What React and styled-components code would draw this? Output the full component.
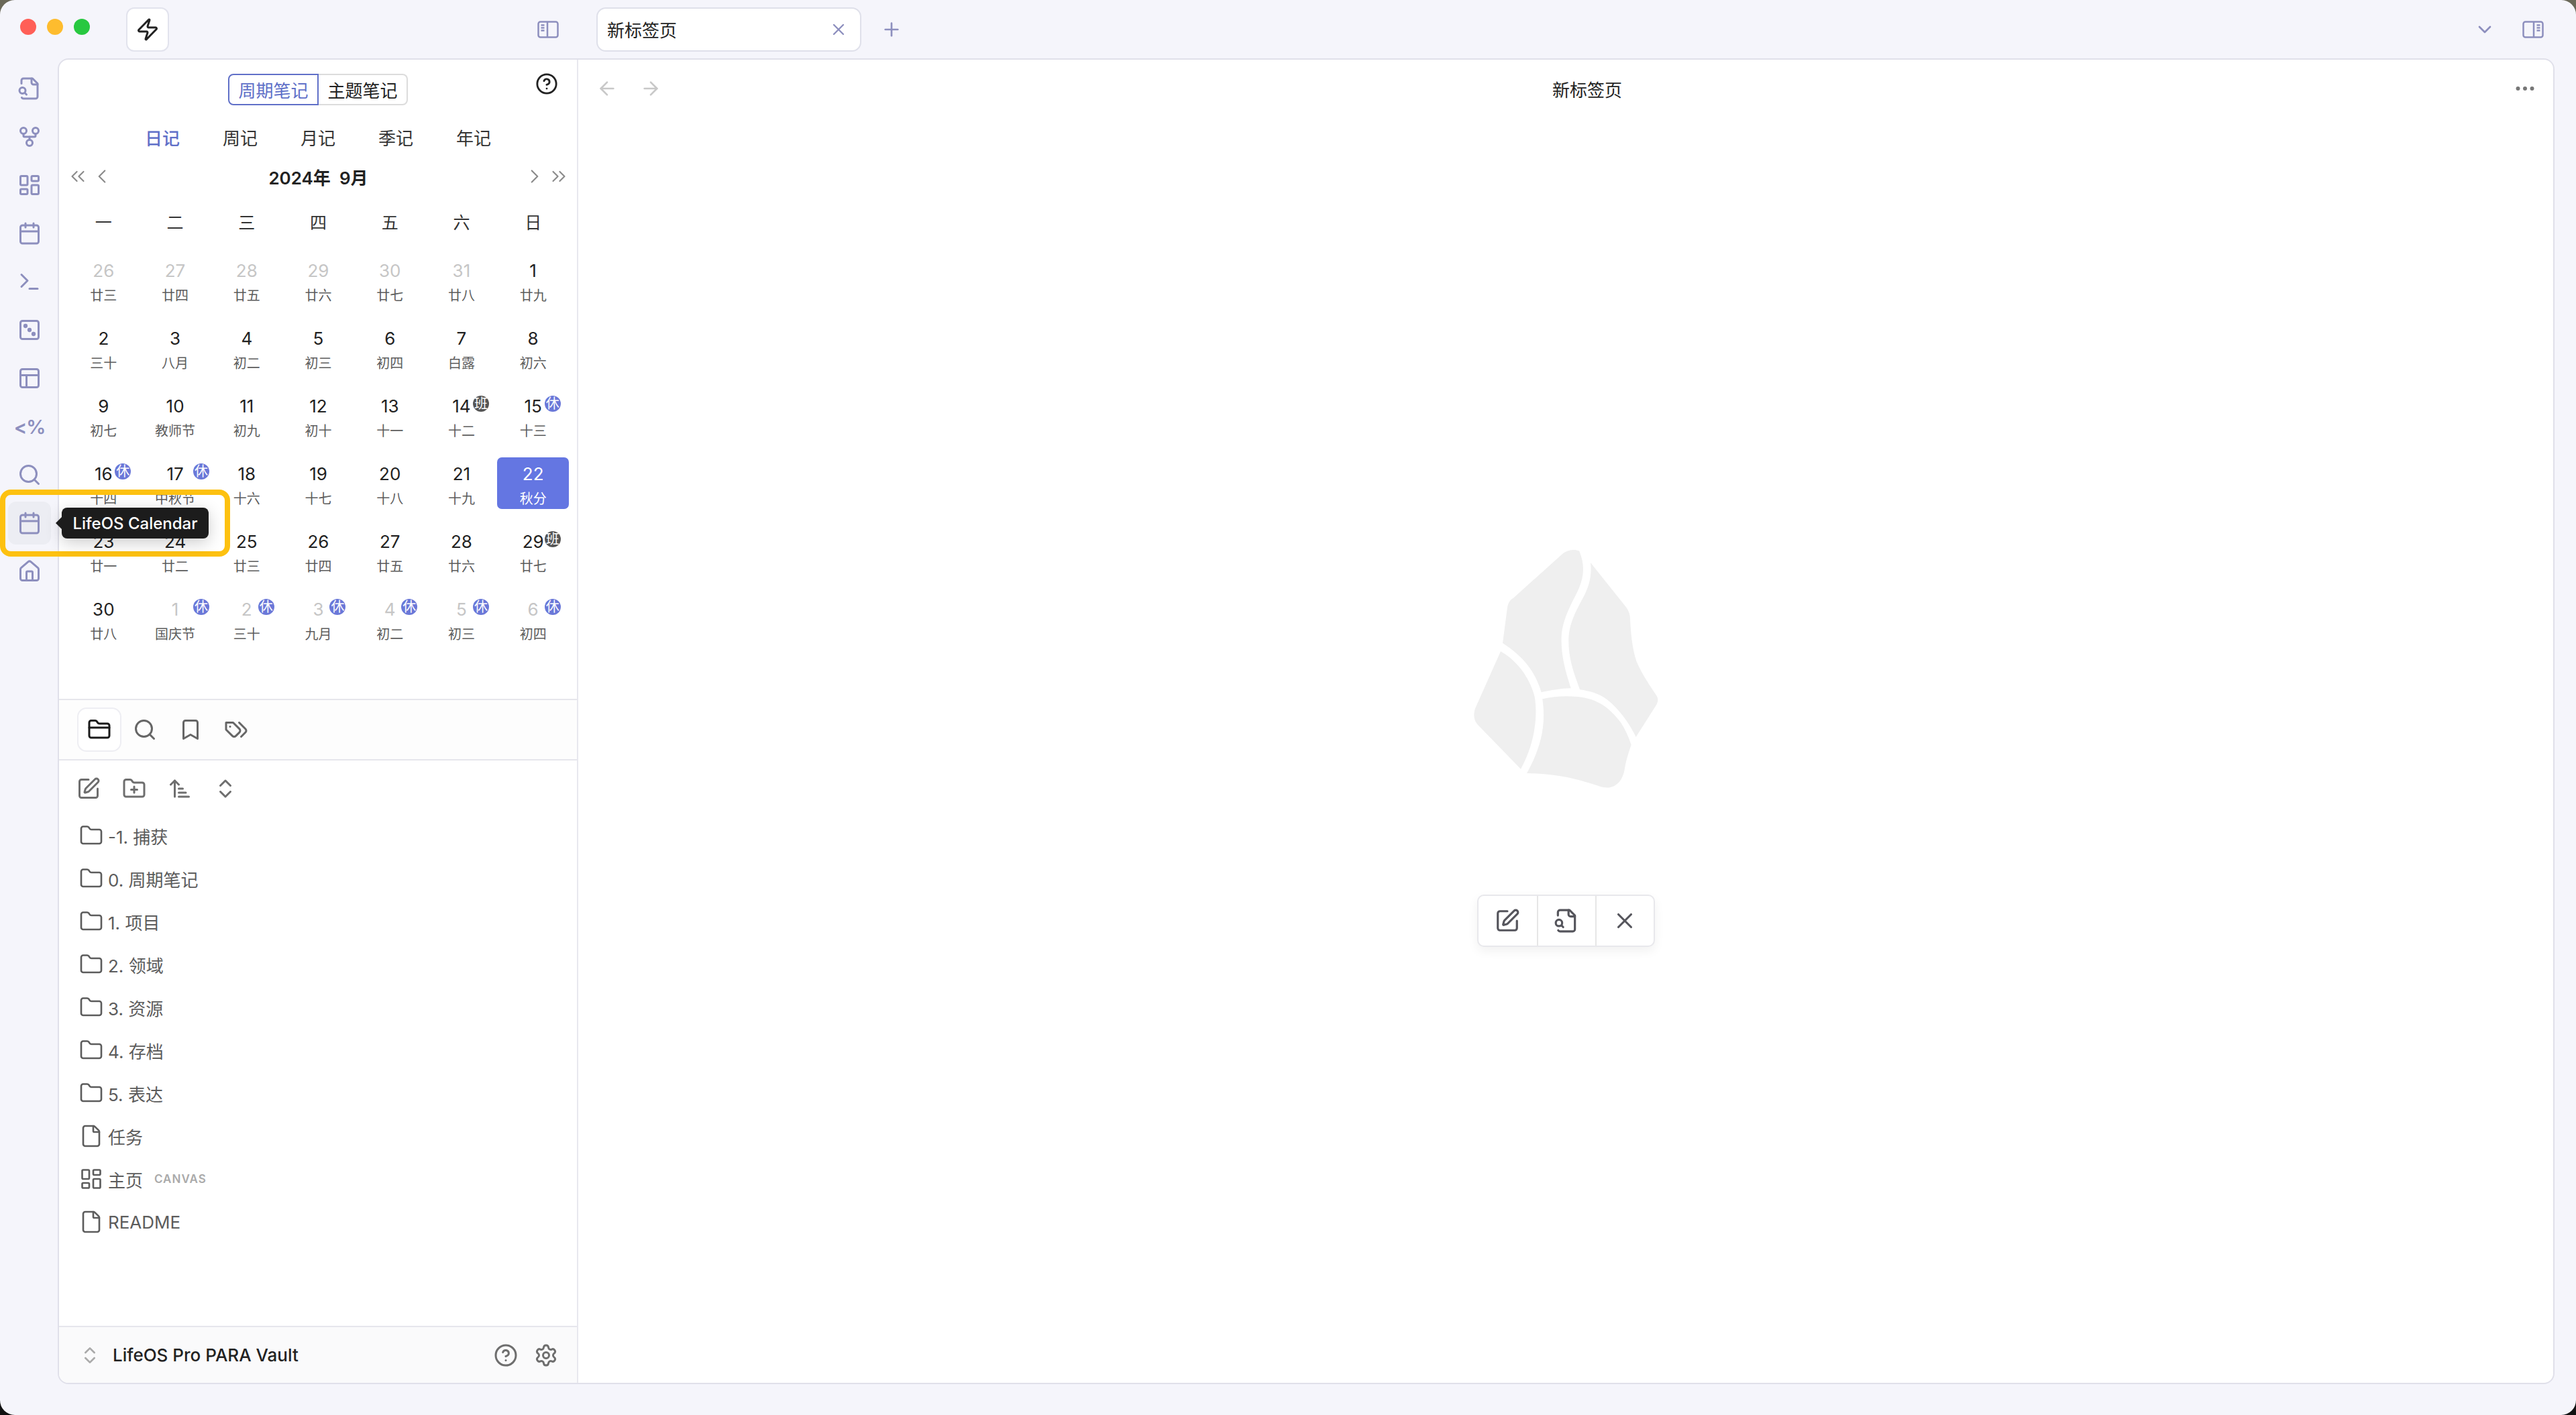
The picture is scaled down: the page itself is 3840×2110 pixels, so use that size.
import React from "react";
import styled, { createGlobalStyle } from "styled-components";
import {
  ArrowLeft,
  ArrowRight,
  ArrowUpNarrowWide,
  Bookmark,
  Calendar,
  ChevronDown,
  ChevronLeft,
  ChevronRight,
  ChevronsLeft,
  ChevronsRight,
  ChevronsUpDown,
  CircleHelp,
  Ellipsis,
  File,
  Folder,
  FolderClosed,
  FolderPlus,
  GitFork,
  House,
  LayoutDashboard,
  PanelsTopLeft,
  Plus,
  Search,
  Settings,
  SquarePen,
  Terminal,
  X,
  Zap,
} from "lucide-react";

const FONT = `Inter, "Noto Sans CJK SC", sans-serif`;
const RIBBON_COLOR = "#8d8fbe";

const GlobalStyle = createGlobalStyle`
  html, body {
    margin: 0;
    padding: 0;
    width: 3840px;
    height: 2110px;
    overflow: hidden;
    background: linear-gradient(#6a6858 0, #6a6858 200px, #111 1900px);
  }
  * { box-sizing: border-box; }
`;

const Win = styled.div`
  position: relative;
  width: 3840px;
  height: 2110px;
  display: flex;
  flex-direction: column;
  background: #f5f5fb;
  border-radius: 22px;
  overflow: hidden;
  font-family: ${FONT};
  color: #222;
`;

const TitleBar = styled.div`
  height: 87px;
  flex: none;
  display: flex;
  align-items: center;
  padding: 0 48px 0 30px;
`;

const Lights = styled.div`
  display: flex;
  gap: 16px;
  margin-top: -7px;
`;

const Light = styled.span`
  width: 24px;
  height: 24px;
  border-radius: 50%;
  background: ${(p) => p.$color};
`;

const QuickButton = styled.div`
  width: 64px;
  height: 66px;
  margin-left: 54px;
  display: flex;
  align-items: center;
  justify-content: center;
  background: #fff;
  border: 2px solid #e2e3ed;
  border-radius: 12px;
  color: #222;
`;

const BarIcon = styled.div`
  display: flex;
  margin-left: ${(p) => p.$left || 0}px;
  color: ${RIBBON_COLOR};
`;

const Tab = styled.div`
  width: 395px;
  height: 66px;
  margin-left: 56px;
  padding: 0 18px 0 14px;
  display: flex;
  align-items: center;
  justify-content: space-between;
  background: #fff;
  border: 2px solid #dfe0ea;
  border-radius: 14px;
  font-size: 26px;
`;

const Spacer = styled.div`
  flex: 1;
`;

const Body = styled.div`
  flex: 1;
  display: flex;
  padding: 0 32px 46px 0;
  min-height: 0;
`;

const Ribbon = styled.nav`
  position: relative;
  z-index: 3;
  width: 88px;
  flex: none;
  display: flex;
  flex-direction: column;
  align-items: center;
  gap: 8px;
  padding-top: 13px;
`;

const RibbonItem = styled.div`
  position: relative;
  width: 64px;
  height: 64px;
  display: flex;
  align-items: center;
  justify-content: center;
  border-radius: 12px;
  color: ${RIBBON_COLOR};
  background: ${(p) => (p.$active ? "#ecedf3" : "transparent")};
`;

const RibbonText = styled.span`
  font-size: 29px;
  font-weight: 600;
  letter-spacing: -1px;
`;

const Tooltip = styled.div`
  position: absolute;
  left: 80px;
  top: 9px;
  width: 219px;
  height: 46px;
  display: flex;
  align-items: center;
  justify-content: center;
  background: #1c1c1c;
  border-radius: 8px;
  color: #fff;
  font-size: 24px;
  font-weight: 500;
  white-space: nowrap;
  box-shadow: 0 6px 24px rgba(0, 0, 0, 0.2);
  &::before {
    content: "";
    position: absolute;
    left: -9px;
    top: 14px;
    border-style: solid;
    border-width: 9px 9px 9px 0;
    border-color: transparent #1c1c1c transparent transparent;
  }
`;

const Highlight = styled.div`
  position: absolute;
  left: 0;
  top: 730px;
  width: 343px;
  height: 100px;
  border: 8px solid #fdc110;
  border-radius: 16px;
  pointer-events: none;
`;

const Workspace = styled.div`
  flex: 1;
  display: flex;
  margin-left: -2px;
  background: #fff;
  border: 2px solid #e0e0ea;
  border-radius: 16px;
  overflow: hidden;
  min-width: 0;
`;

const Sidebar = styled.aside`
  width: 774px;
  flex: none;
  display: flex;
  flex-direction: column;
  border-right: 2px solid #e8e8ee;
`;

const CalendarPane = styled.section`
  height: 955px;
  flex: none;
  padding-top: 21px;
  border-bottom: 2px solid #e6e6ec;
`;

const ToggleRow = styled.div`
  display: grid;
  grid-template-columns: 1fr auto 1fr;
`;

const Toggle = styled.div`
  grid-column: 2;
  display: flex;
  height: 47px;
`;

const ToggleItem = styled.div`
  width: ${(p) => (p.$active ? 135 : 133)}px;
  display: flex;
  align-items: center;
  justify-content: center;
  font-size: 26px;
  color: ${(p) => (p.$active ? "#6070c8" : "#222")};
  border: 2px solid ${(p) => (p.$active ? "#6070c8" : "#dcdcdc")};
  border-left-width: ${(p) => (p.$active ? 2 : 0)}px;
  border-radius: ${(p) => (p.$active ? "8px 0 0 8px" : "0 8px 8px 0")};
`;

const HelpSlot = styled.div`
  grid-column: 3;
  justify-self: end;
  display: flex;
  margin: -2px 28px 0 0;
  color: #222;
`;

const PeriodTabs = styled.div`
  display: flex;
  justify-content: center;
  margin-top: 22px;
  height: 50px;
`;

const PeriodTab = styled.div`
  width: 116px;
  display: flex;
  align-items: center;
  justify-content: center;
  font-size: 26px;
  color: ${(p) => (p.$active ? "#6070c8" : "#333")};
  font-weight: ${(p) => (p.$active ? 500 : 400)};
`;

const MonthRow = styled.div`
  display: flex;
  align-items: center;
  justify-content: space-between;
  height: 40px;
  margin-top: 14px;
  padding: 0 10px 0 11px;
  color: #8a8a8a;
`;

const MonthArrows = styled.div`
  display: flex;
  gap: 2px;
`;

const MonthTitle = styled.div`
  font-size: 26px;
  font-weight: 600;
  color: #222;
  white-space: pre;
`;

const CalGrid = styled.div`
  display: grid;
  grid-template-columns: repeat(7, 1fr);
  padding: 0 12px 0 13px;
`;

const WeekHead = styled(CalGrid)`
  height: 40px;
  margin-top: 27px;
  align-items: center;
  justify-items: center;
  font-size: 25px;
  color: #333;
`;

const Days = styled(CalGrid)`
  margin-top: 29px;
  grid-auto-rows: 77px;
  row-gap: 24px;
`;

const Day = styled.div`
  position: relative;
  display: flex;
  flex-direction: column;
  align-items: center;
  border-radius: 7px;
  background: ${(p) => (p.$today ? "#6476e2" : "transparent")};
`;

const DayNum = styled.span`
  margin-top: 7px;
  height: 36px;
  line-height: 36px;
  font-size: 26px;
  color: ${(p) => (p.$today ? "#fff" : p.$muted ? "#c6c6c6" : "#222")};
`;

const Lunar = styled.span`
  margin-top: 7px;
  font-size: 20px;
  line-height: 24px;
  color: ${(p) => (p.$today ? "#fff" : "#5c5c5c")};
`;

const Badge = styled.span`
  position: absolute;
  top: 9px;
  left: calc(50% + ${(p) => p.$shift}px);
  transform: translateX(-50%);
  width: 24px;
  height: 24px;
  border-radius: 50%;
  display: flex;
  align-items: center;
  justify-content: center;
  font-size: 20px;
  line-height: 1;
  color: #fff;
  background: ${(p) => (p.$work ? "#555" : "#6a78d8")};
`;

const ExplorerTabs = styled.div`
  height: 90px;
  flex: none;
  display: flex;
  align-items: center;
  gap: 2px;
  padding-left: 27px;
  background: #fdfdfd;
  border-bottom: 2px solid #e6e6ec;
`;

const ExplorerTab = styled.div`
  width: 66px;
  height: 66px;
  display: flex;
  align-items: center;
  justify-content: center;
  border-radius: 14px;
  color: ${(p) => (p.$active ? "#1a1a1a" : "#666")};
  background: ${(p) => (p.$active ? "#fff" : "transparent")};
  border: 2px solid ${(p) => (p.$active ? "#eeeef3" : "transparent")};
`;

const ActionRow = styled.div`
  display: flex;
  padding: 10px 0 0 10px;
  color: #6e6e6e;
`;

const ActionButton = styled.div`
  width: 68px;
  height: 64px;
  display: flex;
  align-items: center;
  justify-content: center;
`;

const Tree = styled.div`
  flex: 1;
  padding-top: 6px;
`;

const TreeRow = styled.div`
  height: 64px;
  display: flex;
  align-items: center;
  gap: 7px;
  padding-left: 30px;
  font-size: 26px;
  color: #5c5c5c;
`;

const Tag = styled.span`
  margin-left: 10px;
  font-size: 17px;
  font-weight: 600;
  letter-spacing: 1px;
  color: #aaa;
`;

const VaultBar = styled.div`
  height: 85px;
  flex: none;
  display: flex;
  align-items: center;
  padding: 0 28px 0 30px;
  background: #fafafb;
  border-top: 2px solid #e6e6ec;
  color: #6e6e6e;
`;

const VaultName = styled.div`
  flex: 1;
  margin-left: 18px;
  font-size: 26px;
  font-weight: 500;
  color: #222;
`;

const VaultIcons = styled.div`
  display: flex;
  gap: 24px;
`;

const Main = styled.main`
  flex: 1;
  display: flex;
  flex-direction: column;
  min-width: 0;
`;

const MainHeader = styled.header`
  height: 86px;
  flex: none;
  display: flex;
  align-items: center;
  padding: 0 24px 0 27px;
`;

const NavArrows = styled.div`
  display: flex;
  gap: 33px;
  color: #c8c8c8;
`;

const MainTitle = styled.div`
  flex: 1;
  text-align: center;
  font-size: 26px;
`;

const MoreButton = styled.div`
  display: flex;
  color: #777;
`;

const EmptyState = styled.div`
  flex: 1;
  display: flex;
  flex-direction: column;
  align-items: center;
  padding-top: 644px;
`;

const LogoMark = styled.svg`
  width: 275px;
  height: 356px;
  display: block;
  fill: #efefef;
`;

const EmptyActions = styled.div`
  display: flex;
  height: 78px;
  margin-top: 159px;
  background: #fff;
  border: 2px solid #e8e8ec;
  border-radius: 10px;
  box-shadow: 0 6px 16px rgba(0, 0, 0, 0.06);
  color: #55555c;
`;

const EmptyAction = styled.div`
  width: 87px;
  display: flex;
  align-items: center;
  justify-content: center;
  & + & {
    border-left: 2px solid #e6e6e6;
  }
`;

const Glyph = ({ size = 36, children }) => (
  <svg
    width={size}
    height={size}
    viewBox="0 0 24 24"
    fill="none"
    stroke="currentColor"
    strokeWidth="2"
    strokeLinecap="round"
    strokeLinejoin="round"
  >
    {children}
  </svg>
);

// page outline left open for the little magnifier, as in the reference
const FileSearchIcon = ({ size }) => (
  <Glyph size={size}>
    <path d="M14 2v4a2 2 0 0 0 2 2h4" />
    <path d="M4.268 21a2 2 0 0 0 1.727 1H18a2 2 0 0 0 2-2V7l-5-5H6a2 2 0 0 0-2 2v3" />
    <circle cx="5" cy="14" r="3" />
    <path d="m9 18-1.5-1.5" />
  </Glyph>
);

const DiceIcon = () => (
  <Glyph>
    <rect x="3" y="3" width="18" height="18" rx="2" />
    <circle cx="8" cy="8" r="1.1" fill="currentColor" />
    <circle cx="12" cy="12" r="1.1" fill="currentColor" />
    <circle cx="16" cy="16" r="1.1" fill="currentColor" />
  </Glyph>
);

const TagsIcon = () => (
  <Glyph>
    <path d="M9 5H2v7l6.29 6.29c.94.94 2.48.94 3.42 0l3.58-3.58c.94-.94.94-2.48 0-3.42L9 5Z" />
    <path d="M6 9.01V9" />
    <path d="m15 5 6.3 6.3a2.4 2.4 0 0 1 0 3.4L17 19" />
  </Glyph>
);

const PaneIcon = ({ flip }) => (
  <svg width="32" height="26" viewBox="0 0 32 26" fill="none" stroke="currentColor" strokeWidth="2.5">
    <g transform={flip ? "translate(32 0) scale(-1 1)" : undefined}>
      <rect x="1.5" y="1.5" width="29" height="23" rx="3" />
      <path d="M15 1.5v23M5.5 6.5h5M5.5 10.5h5M5.5 14.5h5" />
    </g>
  </svg>
);

const ribbonIcons = [FileSearchIcon, GitFork, LayoutDashboard, Calendar, Terminal, DiceIcon, PanelsTopLeft];

const weekNames = ["一", "二", "三", "四", "五", "六", "日"];

// n, lunar, muted, badge
const days = [
  ["26", "廿三", 1], ["27", "廿四", 1], ["28", "廿五", 1], ["29", "廿六", 1], ["30", "廿七", 1], ["31", "廿八", 1], ["1", "廿九"],
  ["2", "三十"], ["3", "八月"], ["4", "初二"], ["5", "初三"], ["6", "初四"], ["7", "白露"], ["8", "初六"],
  ["9", "初七"], ["10", "教师节"], ["11", "初九"], ["12", "初十"], ["13", "十一"], ["14", "十二", 0, "班"], ["15", "十三", 0, "休"],
  ["16", "十四", 0, "休"], ["17", "中秋节", 0, "休"], ["18", "十六"], ["19", "十七"], ["20", "十八"], ["21", "十九"], ["22", "秋分"],
  ["23", "廿一"], ["24", "廿二"], ["25", "廿三"], ["26", "廿四"], ["27", "廿五"], ["28", "廿六"], ["29", "廿七", 0, "班"],
  ["30", "廿八"], ["1", "国庆节", 1, "休"], ["2", "三十", 1, "休"], ["3", "九月", 1, "休"], ["4", "初二", 1, "休"], ["5", "初三", 1, "休"], ["6", "初四", 1, "休"],
];

const treeItems = [
  [Folder, "-1. 捕获"],
  [Folder, "0. 周期笔记"],
  [Folder, "1. 项目"],
  [Folder, "2. 领域"],
  [Folder, "3. 资源"],
  [Folder, "4. 存档"],
  [Folder, "5. 表达"],
  [File, "任务"],
  [LayoutDashboard, "主页", "CANVAS"],
  [File, "README"],
];

const App = () => (
  <Win>
    <GlobalStyle />
    <TitleBar>
      <Lights>
        <Light $color="#ff5f57" />
        <Light $color="#febc2e" />
        <Light $color="#28c840" />
      </Lights>
      <QuickButton>
        <Zap size={36} />
      </QuickButton>
      <BarIcon $left={549}>
        <PaneIcon />
      </BarIcon>
      <Tab>
        新标签页
        <X size={28} color={RIBBON_COLOR} />
      </Tab>
      <BarIcon $left={29}>
        <Plus size={32} />
      </BarIcon>
      <Spacer />
      <BarIcon>
        <ChevronDown size={32} />
      </BarIcon>
      <BarIcon $left={40}>
        <PaneIcon flip />
      </BarIcon>
    </TitleBar>

    <Body>
      <Ribbon>
        {ribbonIcons.map((Icon, i) => (
          <RibbonItem key={i}>
            <Icon size={36} />
          </RibbonItem>
        ))}
        <RibbonItem>
          <RibbonText>&lt;%</RibbonText>
        </RibbonItem>
        <RibbonItem>
          <Search size={36} />
        </RibbonItem>
        <RibbonItem $active>
          <Calendar size={36} />
          <Tooltip>LifeOS Calendar</Tooltip>
        </RibbonItem>
        <RibbonItem>
          <House size={36} />
        </RibbonItem>
      </Ribbon>

      <Workspace>
        <Sidebar>
          <CalendarPane>
            <ToggleRow>
              <Toggle>
                <ToggleItem $active>周期笔记</ToggleItem>
                <ToggleItem>主题笔记</ToggleItem>
              </Toggle>
              <HelpSlot>
                <CircleHelp size={34} />
              </HelpSlot>
            </ToggleRow>
            <PeriodTabs>
              <PeriodTab $active>日记</PeriodTab>
              <PeriodTab>周记</PeriodTab>
              <PeriodTab>月记</PeriodTab>
              <PeriodTab>季记</PeriodTab>
              <PeriodTab>年记</PeriodTab>
            </PeriodTabs>
            <MonthRow>
              <MonthArrows>
                <ChevronsLeft size={34} strokeWidth={1.5} />
                <ChevronLeft size={34} strokeWidth={1.5} />
              </MonthArrows>
              <MonthTitle>2024年  9月</MonthTitle>
              <MonthArrows>
                <ChevronRight size={34} strokeWidth={1.5} />
                <ChevronsRight size={34} strokeWidth={1.5} />
              </MonthArrows>
            </MonthRow>
            <WeekHead>
              {weekNames.map((w) => (
                <span key={w}>{w}</span>
              ))}
            </WeekHead>
            <Days>
              {days.map(([n, lunar, muted, badge], i) => {
                const today = n === "22";
                return (
                  <Day key={i} $today={today}>
                    <DayNum $muted={muted} $today={today}>
                      {n}
                    </DayNum>
                    <Lunar $today={today}>{lunar}</Lunar>
                    {badge && (
                      <Badge $work={badge === "班"} $shift={i % 7 === 1 ? 39 : 29}>
                        {badge}
                      </Badge>
                    )}
                  </Day>
                );
              })}
            </Days>
          </CalendarPane>

          <ExplorerTabs>
            <ExplorerTab $active>
              <FolderClosed size={36} />
            </ExplorerTab>
            <ExplorerTab>
              <Search size={36} />
            </ExplorerTab>
            <ExplorerTab>
              <Bookmark size={36} />
            </ExplorerTab>
            <ExplorerTab>
              <TagsIcon />
            </ExplorerTab>
          </ExplorerTabs>

          <ActionRow>
            <ActionButton>
              <SquarePen size={36} />
            </ActionButton>
            <ActionButton>
              <FolderPlus size={36} />
            </ActionButton>
            <ActionButton>
              <ArrowUpNarrowWide size={36} />
            </ActionButton>
            <ActionButton>
              <ChevronsUpDown size={36} />
            </ActionButton>
          </ActionRow>

          <Tree>
            {treeItems.map(([Icon, label, tag]) => (
              <TreeRow key={label}>
                <Icon size={36} strokeWidth={1.75} />
                {label}
                {tag && <Tag>{tag}</Tag>}
              </TreeRow>
            ))}
          </Tree>

          <VaultBar>
            <ChevronsUpDown size={32} color="#aaa" />
            <VaultName>LifeOS Pro PARA Vault</VaultName>
            <VaultIcons>
              <CircleHelp size={36} />
              <Settings size={36} />
            </VaultIcons>
          </VaultBar>
        </Sidebar>

        <Main>
          <MainHeader>
            <NavArrows>
              <ArrowLeft size={32} />
              <ArrowRight size={32} />
            </NavArrows>
            <MainTitle>新标签页</MainTitle>
            <MoreButton>
              <Ellipsis size={36} />
            </MoreButton>
          </MainHeader>
          <EmptyState>
            <LogoMark viewBox="293 170 825 1068">
              <path d="M765 178C790 240 785 290 765 340C745 390 690 470 685 560C682 650 705 720 727 792C680 793 640 800 595 810C570 730 530 660 422 590L443 430C447 410 455 395 470 388L690 190C710 172 745 168 765 178Z" />
              <path d="M815 230L975 430C985 445 992 460 992 480C995 540 1000 610 1020 670C1040 720 1080 780 1110 825C1118 838 1118 850 1110 865L1018 1010C980 930 920 860 870 830C840 812 800 802 767 798C740 720 715 660 717 570C720 490 760 430 790 370C815 320 820 270 815 230Z" />
              <path d="M413 627C490 670 545 750 565 830C580 920 565 1040 503 1153L315 960C295 940 288 915 300 880Z" />
              <path d="M600 840C650 828 700 825 760 830C850 840 900 880 950 945C970 975 985 1010 997 1045C985 1080 975 1110 968 1150C960 1210 920 1250 860 1232C760 1200 680 1175 530 1172C580 1080 620 980 600 840Z" />
            </LogoMark>
            <EmptyActions>
              <EmptyAction>
                <SquarePen size={38} />
              </EmptyAction>
              <EmptyAction>
                <FileSearchIcon size={38} />
              </EmptyAction>
              <EmptyAction>
                <X size={38} />
              </EmptyAction>
            </EmptyActions>
          </EmptyState>
        </Main>
      </Workspace>
    </Body>
    <Highlight />
  </Win>
);

export default App;
